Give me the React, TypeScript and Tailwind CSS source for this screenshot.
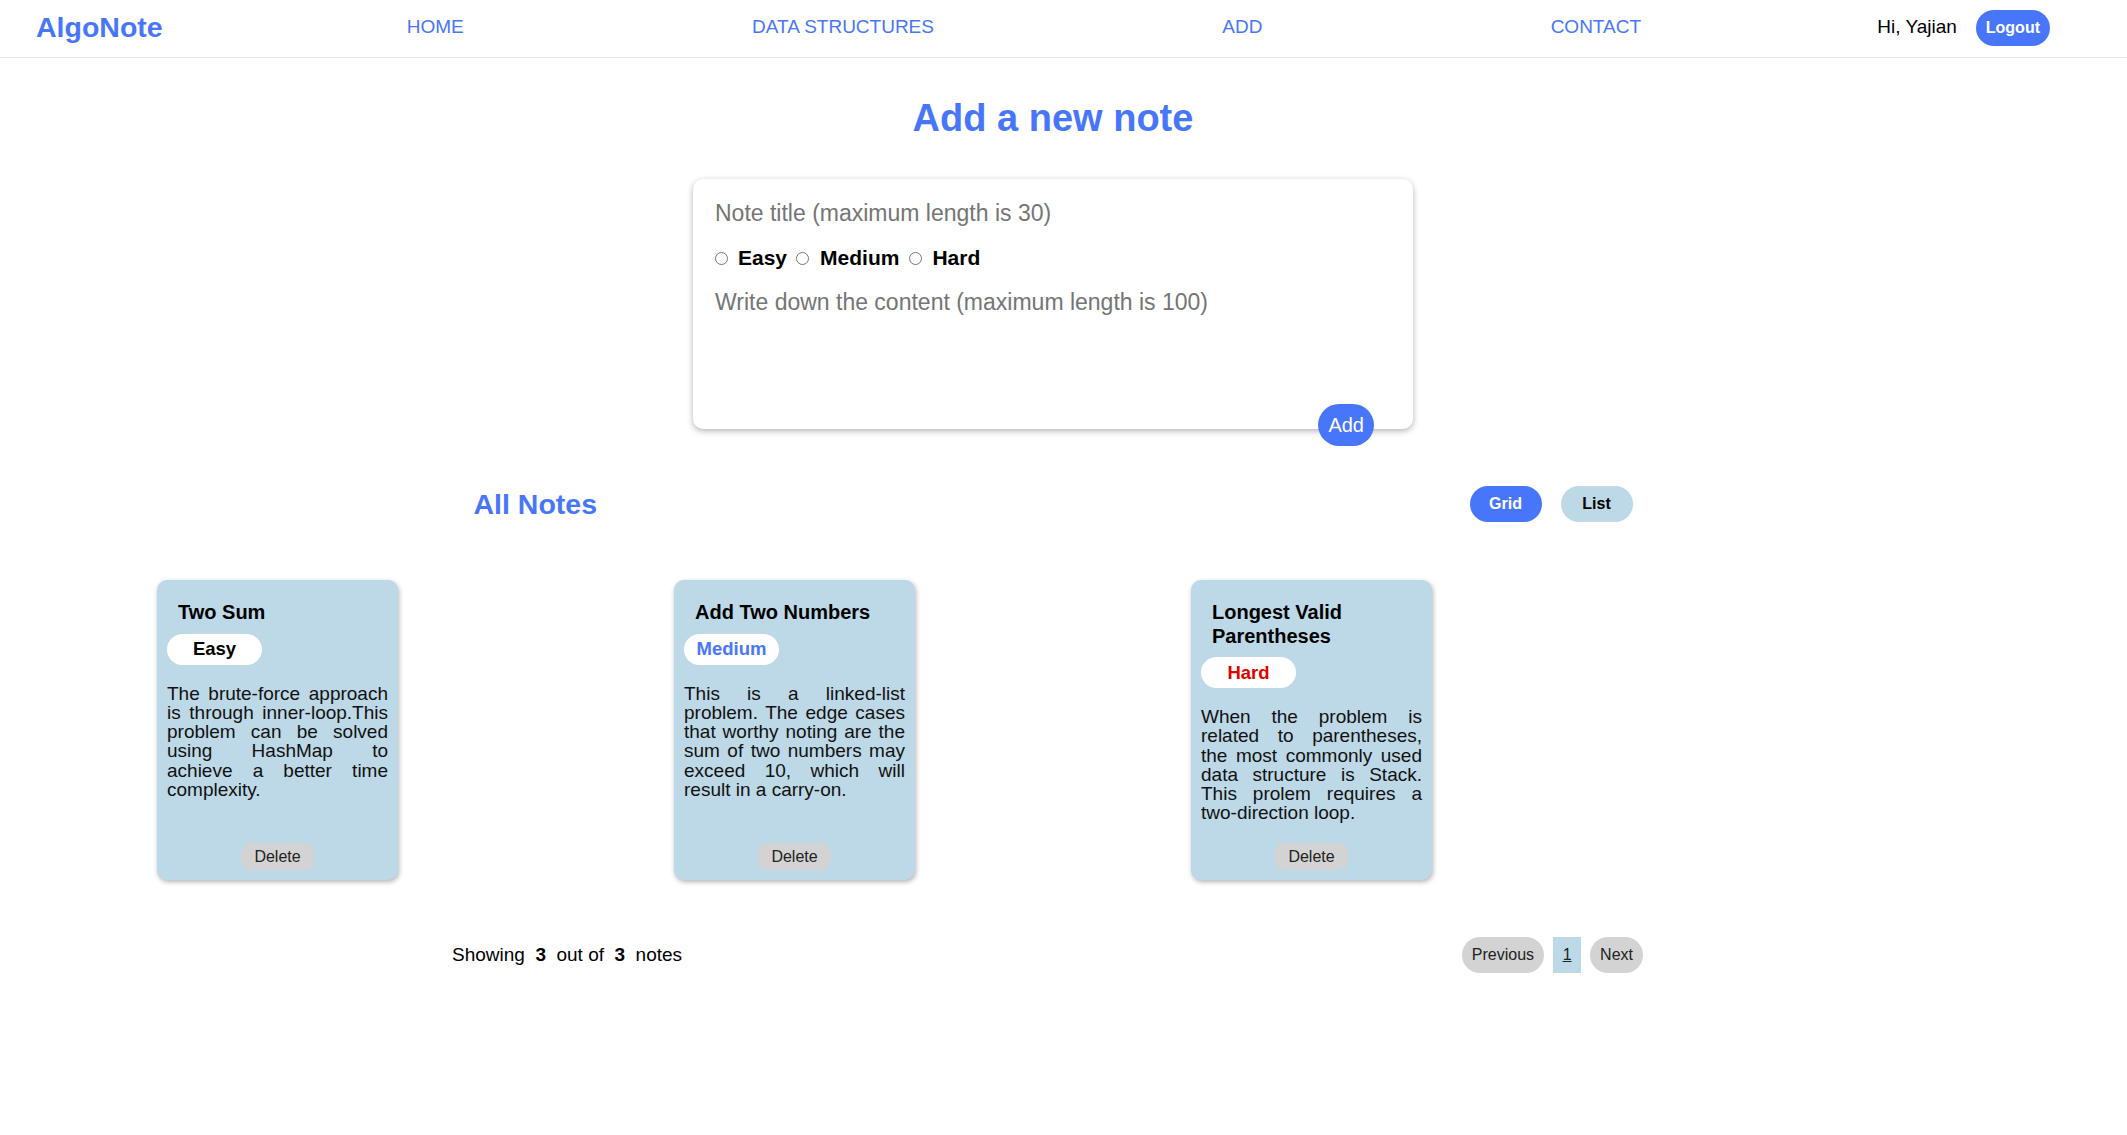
import { useState } from "react";

type Note = {
  id: number;
  title: string;
  level: "Easy" | "Medium" | "Hard";
  content: string;
};

const notes: Note[] = [
  {
    id: 1,
    title: "Two Sum",
    level: "Easy",
    content:
      "The brute-force approach is through inner-loop.This problem can be solved using HashMap to achieve a better time complexity.",
  },
  {
    id: 2,
    title: "Add Two Numbers",
    level: "Medium",
    content:
      "This is a linked-list problem. The edge cases that worthy noting are the sum of two numbers may exceed 10, which will result in a carry-on.",
  },
  {
    id: 3,
    title: "Longest Valid Parentheses",
    level: "Hard",
    content:
      "When the problem is related to parentheses, the most commonly used data structure is Stack. This prolem requires a two-direction loop.",
  },
];

const levelColor = {
  Easy: "text-black",
  Medium: "text-[#4876fb]",
  Hard: "text-[#e00000]",
};

export default function App() {
  const [view, setView] = useState<"grid" | "list">("grid");

  return (
    <div className="min-h-screen bg-white font-['Liberation_Sans',Arial,sans-serif] text-black">
      {/* NAV */}
      <nav className="h-[58px] flex items-center pl-[36px] pr-[77px] pb-[2px] border-b border-[#e3e3e3]">
        <span className="text-[28.5px] font-bold text-[#4876fb]">AlgoNote</span>
        <div className="flex-1 ml-[100px] mr-[92px] flex justify-around text-[19px] text-[#4876fb]">
          <a href="#">HOME</a>
          <a href="#">DATA STRUCTURES</a>
          <a href="#">ADD</a>
          <a href="#">CONTACT</a>
        </div>
        <div className="flex items-center gap-[19px]">
          <span className="text-[19px]">Hi, Yajian</span>
          <button className="h-[36px] px-[10px] rounded-full bg-[#4876fb] text-white text-[16px] font-bold">
            Logout
          </button>
        </div>
      </nav>

      <main className="w-[2106px] flex flex-col items-center">
        <h1 className="mt-[38px] text-[38px] leading-[44px] font-bold text-[#4876fb]">Add a new note</h1>

        {/* --- ADD FORM --- */}
        <div className="relative mt-[39px] w-[720px] h-[250px] bg-white rounded-[10px] shadow-[0_2px_6px_rgba(0,0,0,0.3)] px-[22px] pt-[20px]">
          <input
            placeholder="Note title (maximum length is 30)"
            className="block w-full h-[28px] text-[23px] leading-[28px] outline-none placeholder:text-[#757575]"
          />
          <div className="mt-[19px] h-[24px] flex items-center text-[21px] font-bold">
            <input type="radio" name="level" className="m-0 w-[13px] h-[13px]" />
            <span className="ml-[10px]">Easy</span>
            <input type="radio" name="level" className="m-0 ml-[9px] w-[13px] h-[13px]" />
            <span className="ml-[11px]">Medium</span>
            <input type="radio" name="level" className="m-0 ml-[10px] w-[13px] h-[13px]" />
            <span className="ml-[10px]">Hard</span>
          </div>
          <textarea
            placeholder="Write down the content (maximum length is 100)"
            className="block mt-[18px] w-full h-[110px] resize-none text-[23px] leading-[28px] outline-none placeholder:text-[#757575]"
          />
          <button className="absolute right-[39px] bottom-[-17px] h-[42px] px-[10px] rounded-[21px] bg-[#4876fb] text-white text-[20px]">
            Add
          </button>
        </div>

        {/* --- NOTES HEADER --- */}
        <div className="mt-[57px] w-[1159px] h-[36px] flex items-center justify-between">
          <h2 className="text-[28.5px] font-bold text-[#4876fb]">All Notes</h2>
          <div className="flex gap-[19px]">
            <button
              onClick={() => setView("grid")}
              className={`w-[72px] h-[36px] rounded-full text-[16px] font-bold ${
                view === "grid" ? "bg-[#4876fb] text-white" : "bg-[#bdd8e6] text-black"
              }`}
            >
              Grid
            </button>
            <button
              onClick={() => setView("list")}
              className={`w-[72px] h-[36px] rounded-full text-[16px] font-bold ${
                view === "list" ? "bg-[#4876fb] text-white" : "bg-[#bdd8e6] text-black"
              }`}
            >
              List
            </button>
          </div>
        </div>

        {/* --- CARDS --- */}
        <div className="mt-[58px] w-[2068px] grid grid-cols-4 justify-items-center">
          {notes.map((n) => (
            <div
              key={n.id}
              className="w-[241px] h-[300px] bg-[#bdd8e6] rounded-[10px] shadow-[1px_2px_5px_rgba(0,0,0,0.3)] flex flex-col px-[10px] pt-[21px] pb-[10px]"
            >
              <h3 className="px-[11px] text-[20px] leading-[23.5px] font-bold">{n.title}</h3>
              <span
                className={`mt-[9px] w-[95px] h-[31px] shrink-0 rounded-full bg-white flex items-center justify-center text-[18.5px] font-bold ${levelColor[n.level]}`}
              >
                {n.level}
              </span>
              <p className="mt-[19px] text-[19px] leading-[19.3px] text-justify text-[#111]">{n.content}</p>
              <button className="mt-auto self-center h-[27px] px-[13px] rounded-[10px] bg-[#d3d3d3] text-[16px] text-[#222]">
                Delete
              </button>
            </div>
          ))}
        </div>

        {/* --- PAGINATION --- */}
        <div className="mt-[57px] self-start ml-[452px] w-[1191px] h-[36px] flex items-center justify-between">
          <div className="flex items-center gap-[10.5px] text-[19px]">
            <span>Showing</span>
            <span className="font-bold">3</span>
            <span>out of</span>
            <span className="font-bold">3</span>
            <span>notes</span>
          </div>
          <div className="flex items-center gap-[9px] text-[16px] text-[#222]">
            <button className="h-[36px] px-[10px] rounded-full bg-[#d3d3d3]">Previous</button>
            <button className="w-[28px] h-[36px] bg-[#bdd8e6] underline">1</button>
            <button className="h-[36px] px-[10px] rounded-full bg-[#d3d3d3]">Next</button>
          </div>
        </div>
      </main>
    </div>
  );
}
